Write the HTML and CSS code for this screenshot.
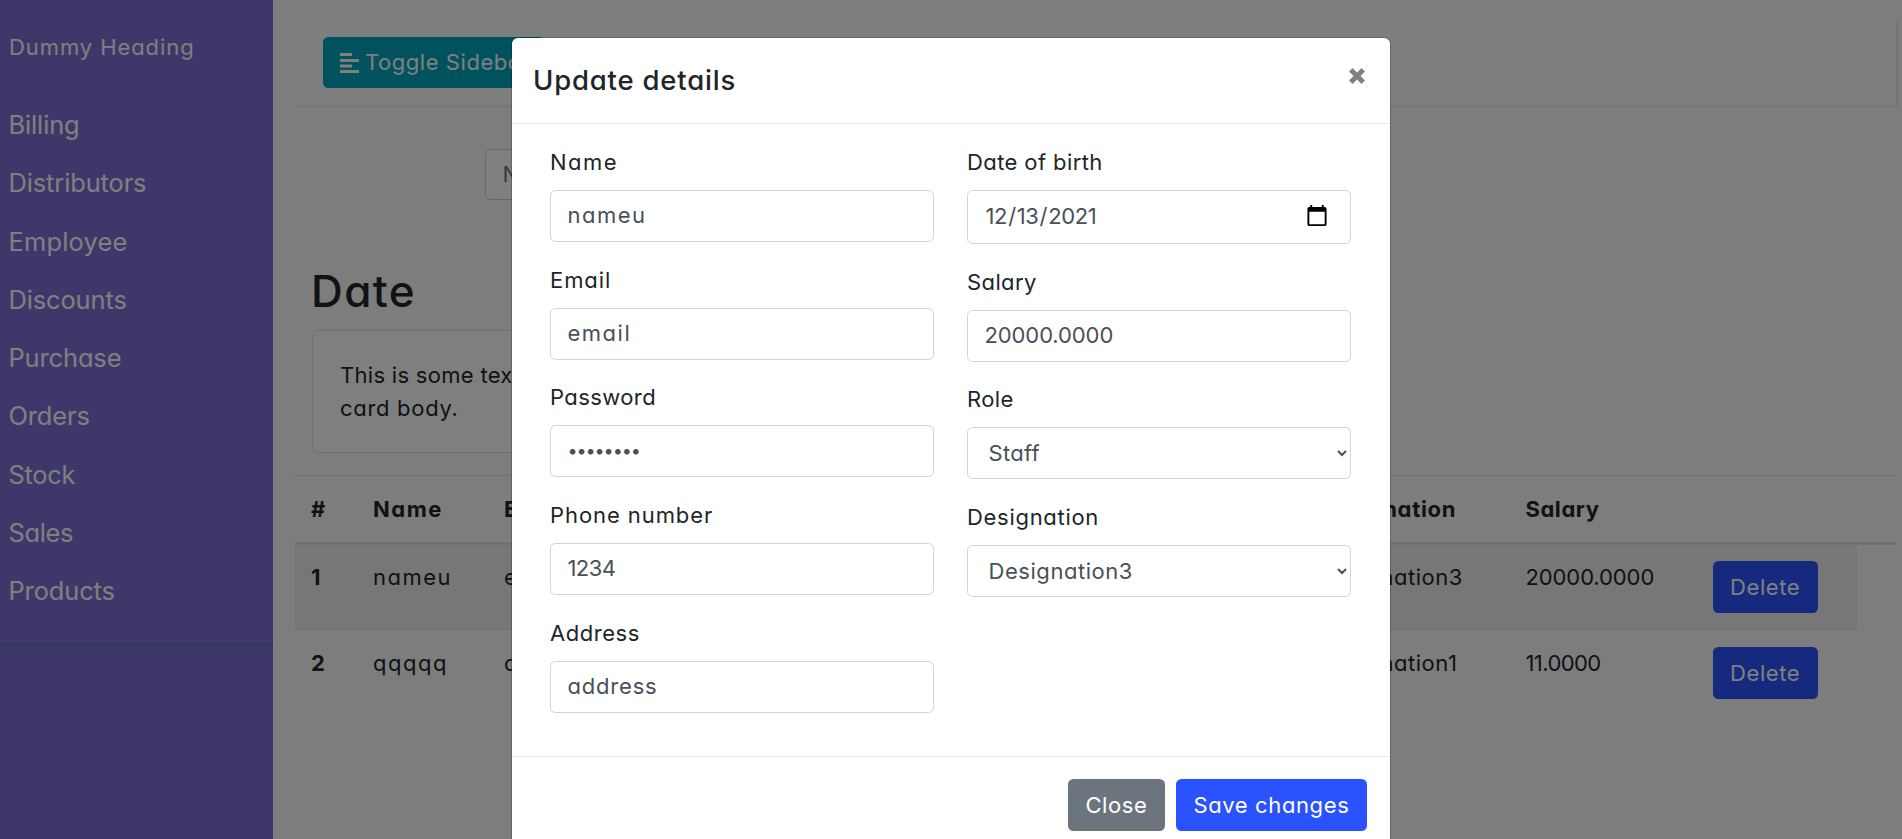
FILE: index.html
```html
<!DOCTYPE html>
<html lang="en">
<head>
<meta charset="utf-8">
<title>Employee</title>
<link rel="stylesheet" href="styles.css">
</head>
<body>
<div class="wrapper">
  <nav class="sidebar">
    <div class="sidebar-header ls-9">Dummy Heading</div>
    <ul class="menu">
      <li class="ls-0">Billing</li>
      <li class="ls-0">Distributors</li>
      <li class="ls-2">Employee</li>
      <li class="ls-0">Discounts</li>
      <li class="ls-0">Purchase</li>
      <li class="ls-0">Orders</li>
      <li class="ls-n3">Stock</li>
      <li class="ls-n3">Sales</li>
      <li class="ls-0">Products</li>
    </ul>
  </nav>
  <main class="content">
    <div class="navbar">
      <button class="btn btn-info ls-5"><svg class="align-icon" viewBox="0 0 19 20"><path d="M0 0h12v3H0zM0 6h19v3H0zM0 11.500h12v3H0zM0 17h19v3H0z"/></svg>Toggle Sidebar</button>
    </div>
    <div class="search"><input class="control" placeholder="Name"></div>
    <h1 class="heading ls-11">Date</h1>
    <div class="card"><span class="ls-3">This is some text within a</span><br><span class="ls-7">card body.</span></div>
    <div class="table">
      <div class="row head">
        <span>#</span><span class="ls-14">Name</span><span>Email</span><span class="ls-7">Designation</span><span class="ls-5">Salary</span>
      </div>
      <div class="row striped">
        <b>1</b><span class="ls-14">nameu</span><span class="ls-14">email</span><span class="ls-5">Designation3</span><span class="ls-0">20000.0000</span><button class="btn btn-primary ls-5">Delete</button>
      </div>
      <div class="row">
        <b>2</b><span class="ls-14">qqqqq</span><span class="ls-14">qqq</span><span class="ls-5">Designation1</span><span class="ls-n6">11.0000</span><button class="btn btn-primary ls-5">Delete</button>
      </div>
    </div>
  </main>
</div>
<div class="backdrop"></div>
<div class="modal">
  <div class="modal-header">
    <h5 class="modal-title ls-8">Update details</h5>
    <svg class="close" viewBox="0 0 16 16"><path d="M3.500 0 0 3.500 4.500 8 0 12.500 3.500 16 8 11.500 12.500 16 16 12.500 11.500 8 16 3.500 12.500 0 8 4.500z"/></svg>
  </div>
  <div class="modal-body">
    <div class="col">
      <label class="ls-14">Name</label><input class="control ls-14" value="nameu">
      <label class="ls-9">Email</label><input class="control ls-14" value="email">
      <label class="ls-4">Password</label><input class="control password" type="password" value="password">
      <label class="ls-9">Phone number</label><input class="control ls-n6" value="1234">
      <label class="ls-5">Address</label><input class="control ls-8" value="address">
    </div>
    <div class="col">
      <label class="ls-4">Date of birth</label><input class="control date" type="date" value="2021-12-13">
      <label class="ls-4">Salary</label><input class="control ls-0" value="20000.0000">
      <label class="ls-4">Role</label><select class="control ls-3"><option>Staff</option></select>
      <label class="ls-7">Designation</label><select class="control ls-5"><option>Designation3</option></select>
    </div>
  </div>
  <div class="modal-footer">
    <button class="btn btn-secondary ls-5">Close</button>
    <button class="btn btn-primary ls-6">Save changes</button>
  </div>
</div>
</body>
</html>
```
FILE: styles.css
```css
* { box-sizing: border-box; }
body {
  margin: 0;
  height: 839px;
  overflow: hidden;
  background: #fafafa;
  color: #212529;
  font: 400 22px/33px Inter, "Open Sans", sans-serif;
  font-feature-settings: "cv11";
}
button, input, select { font: inherit; font-feature-settings: inherit; margin: 0; }

/* Tracking steps */
.ls-n6 { letter-spacing: -0.6px; }
.ls-n3 { letter-spacing: -0.3px; }
.ls-0 { letter-spacing: -0.1px; }
.ls-2 { letter-spacing: 0.2px; }
.ls-3 { letter-spacing: 0.3px; }
.ls-4 { letter-spacing: 0.4px; }
.ls-5 { letter-spacing: 0.55px; }
.ls-6 { letter-spacing: 0.62px; }
.ls-7 { letter-spacing: 0.7px; }
.ls-8 { letter-spacing: 0.8px; }
.ls-9 { letter-spacing: 0.92px; }
.ls-11 { letter-spacing: 1.4px; }
.ls-14 { letter-spacing: 1.5px; }

.wrapper { display: flex; height: 839px; }
.sidebar { width: 273px; flex: none; background: #7c71d5; color: #fff; }
.sidebar-header { padding: 31px 9px 0; height: 86px; }
.menu {
  list-style: none;
  margin: 0;
  padding: 10px 8.500px 22px;
  height: 559px;
  border-bottom: 1px solid #47748b;
  font-size: 25.4px;
}
.menu li { height: 58.3px; line-height: 58.3px; }

.content { flex: 1; padding: 20px 6px 0 22px; min-width: 0; }
.navbar {
  height: 85px;
  padding: 17px 28px;
  background: #fafffd;
  box-shadow: 1px 1px 3px rgba(0, 0, 0, 0.1);
}
.btn {
  height: 52px;
  padding: 0 17.6px;
  border: 0;
  border-radius: 5.5px;
  color: #fff;
  white-space: nowrap;
}
.btn-info { display: flex; align-items: center; gap: 6px; width: 222px; height: 51px; padding: 0 17px; background: #00a5bd; }
.btn-primary { background: #2a52ff; }
.btn-secondary { background: #6c757d; }
.align-icon { width: 19px; height: 20px; flex: none; fill: #fff; }

.control {
  display: block;
  width: 100%;
  height: 52px;
  padding: 0 16.500px 2px;
  border: 1px solid #ced4da;
  border-radius: 5.5px;
  background: #fff;
  color: #495057;
}
.search { width: 600px; margin: 44px 0 0 190px; }
.search .control { height: 51px; }
.search .control::placeholder { color: #6c757d; }
.heading { margin: 65px 0 0 16px; font-size: 44px; line-height: 53px; font-weight: 500; }
.card {
  width: 385px;
  height: 123px;
  margin: 12px 0 22px 17px;
  padding: 28px 27px;
  border: 1px solid #dfdfdf;
  border-radius: 5.5px;
  background: #fff;
  white-space: nowrap;
}
.row {
  display: grid;
  grid-template-columns: 62px 131px 814.500px 207px 187px 1fr;
  align-items: start;
  width: 1562px;
  height: 86px;
  padding: 17px 0 0 16px;
  border-top: 1px solid #dee2e6;
}
.row .btn { justify-self: start; width: 105px; }
.head {
  width: auto;
  height: 70px;
  border-bottom: 3px solid #dee2e6;
  font-weight: 700;
}
.striped { border-top: 0; height: 84px; padding-top: 16px; background: #eee; }

.backdrop { position: absolute; inset: 0; background: rgba(0, 0, 0, 0.5); }
.modal {
  position: absolute;
  left: 511px;
  top: 37px;
  width: 880px;
  height: 830px;
  border: 1px solid rgba(0, 0, 0, 0.2);
  border-radius: 6.6px;
  background: #fff;
  background-clip: padding-box;
}
.modal-header {
  display: flex;
  justify-content: space-between;
  height: 86px;
  padding: 22px 25px 0 21px;
  border-bottom: 1px solid #e9ecef;
}
.modal-title { margin: 0; font-size: 27.500px; line-height: 41px; font-weight: 500; }
.close { width: 16px; height: 16px; margin-top: 8px; fill: #808080; }
.modal-body { display: flex; gap: 33px; height: 632px; padding: 22px 38px 0; }
.col { width: 384px; }
.col label { display: block; height: 33px; margin-bottom: 11px; }
.col .control { margin-bottom: 21.700px; }
.col .date { height: 54.1px; letter-spacing: -0.35px; }
.date::-webkit-calendar-picker-indicator { width: 24px; height: 24px; margin-right: 3px; padding: 2px; box-sizing: content-box; }
.col select.control { height: 51.8px; margin-bottom: 21.900px; padding: 0 0 1px 16.500px; }
.col .password { font-size: 18px; letter-spacing: -1.1px; }
.modal-footer {
  display: flex;
  justify-content: flex-end;
  gap: 11px;
  padding: 22px 23px;
  border-top: 1px solid #e9ecef;
}
```
